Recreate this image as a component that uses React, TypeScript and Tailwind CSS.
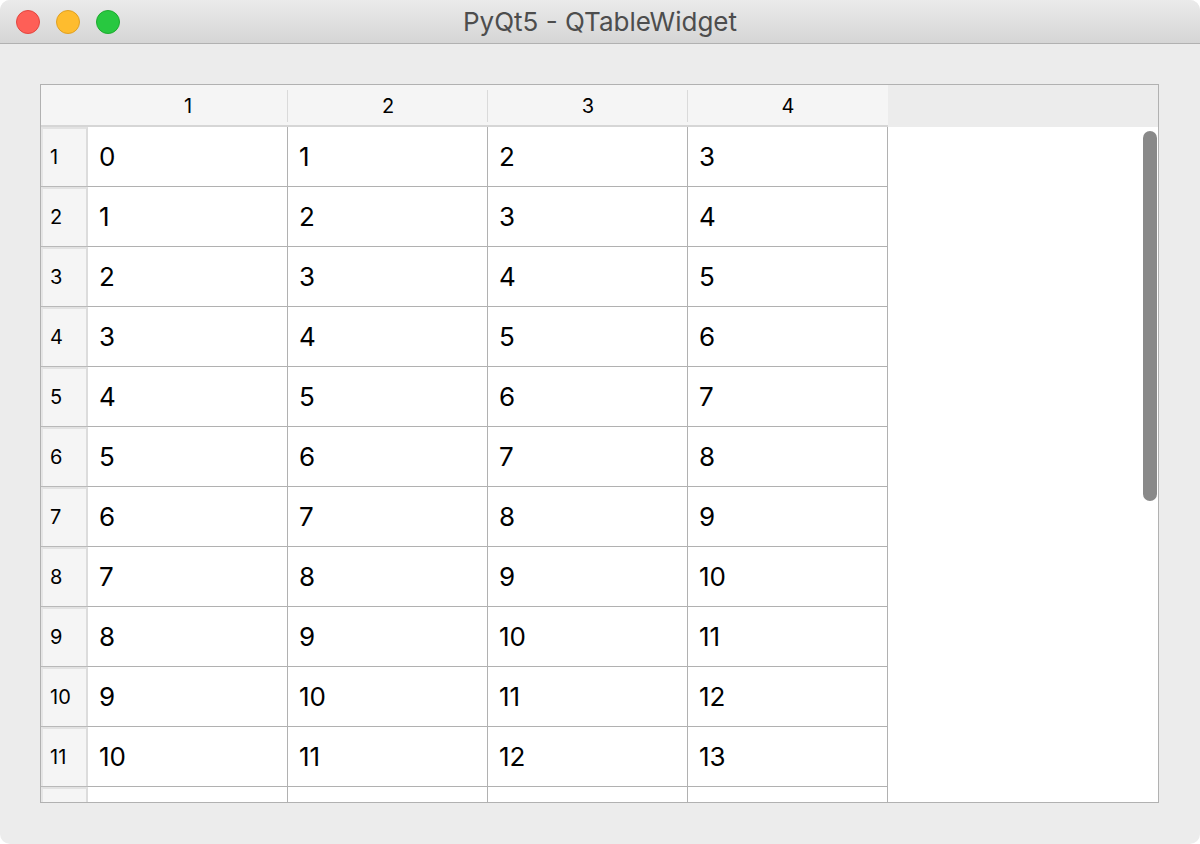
import React from "react";

const font = { fontFamily: "Inter, 'Noto Sans', 'Liberation Sans', sans-serif" };

const cols = [1, 2, 3, 4];
const rows = Array.from({ length: 12 }, (_, i) => i);

function TrafficLights() {
    return (
        <div className="flex items-center gap-[16px] pl-[16px]">
            <div className="w-[24px] h-[24px] rounded-full bg-[#fe5f57] border border-[#e2463f]" />
            <div className="w-[24px] h-[24px] rounded-full bg-[#febc2e] border border-[#dfa023]" />
            <div className="w-[24px] h-[24px] rounded-full bg-[#28c840] border border-[#1eaa2f]" />
        </div>
    );
}

function TitleBar() {
    return (
        <div className="relative h-[44px] flex items-center bg-gradient-to-b from-[#ebebeb] to-[#d5d5d5] border-b border-[#b1b1b1]">
            <TrafficLights />
            <div className="absolute inset-0 flex items-center justify-center text-[26px] text-[#4d4d4d] pointer-events-none">
                PyQt5 - QTableWidget
            </div>
        </div>
    );
}

function HeaderRow() {
    return (
        <div className="flex h-[42px]">
            <div className="w-[47px] bg-[#f5f5f5] border-b-2 border-[#d6d6d6]" />
            {cols.map((c, i) => (
                <div
                    key={c}
                    className="w-[200px] relative flex items-center justify-center pt-[1px] bg-[#f5f5f5] border-b-2 border-[#d6d6d6] text-[20px] text-black"
                >
                    {c}
                    {i < 3 && (
                        <div className="absolute right-[-1px] top-[5px] bottom-[3px] w-[2px] bg-[#dadada]" />
                    )}
                </div>
            ))}
            <div className="flex-1 bg-[#ececec]" />
        </div>
    );
}

// the last row is only partly in view, its text falls below the frame
function TableRow({ r, partial }: { r: number; partial?: boolean }) {
    return (
        <div className="flex h-[60px] shrink-0">
            <div className="w-[47px] h-[60px] border-b border-[#b9b9b9] bg-[#f5f5f5]">
                <div className="h-full flex items-center pl-[7px] pb-[1px] border-l-2 border-t-2 border-r-2 border-l-[#e6e6e6] border-t-[#e2e2e2] border-r-[#dcdcdc] text-[20px] text-black">
                    {partial ? null : r + 1}
                </div>
            </div>
            {cols.map((c, i) => (
                <div
                    key={c}
                    className="w-[200px] h-[60px] flex items-center pl-[11px] pb-[1px] border-r border-b border-[#b1b1b1] bg-white text-[26px] text-black"
                >
                    {partial ? null : r + i}
                </div>
            ))}
        </div>
    );
}

export default function App() {
    return (
        <div className="w-[1200px] h-[844px] bg-white" style={font}>
            <div className="w-full h-full rounded-[10px] overflow-hidden bg-[#ececec] flex flex-col">
                <TitleBar />
                <div className="pl-[40px] pt-[40px]">
                    <div className="w-[1119px] h-[719px] border border-[#b1b1b1] flex flex-col overflow-hidden">
                        <HeaderRow />
                        <div className="flex flex-1 overflow-hidden">
                            <div className="flex flex-col w-[847px] overflow-hidden">
                                {rows.map((r) => (
                                    <TableRow key={r} r={r} partial={r === 11} />
                                ))}
                            </div>
                            <div className="flex-1 bg-white relative">
                                <div className="absolute top-[4px] right-[1px] w-[14px] h-[370px] rounded-full bg-[#898989]" />
                            </div>
                        </div>
                    </div>
                </div>
            </div>
        </div>
    );
}
